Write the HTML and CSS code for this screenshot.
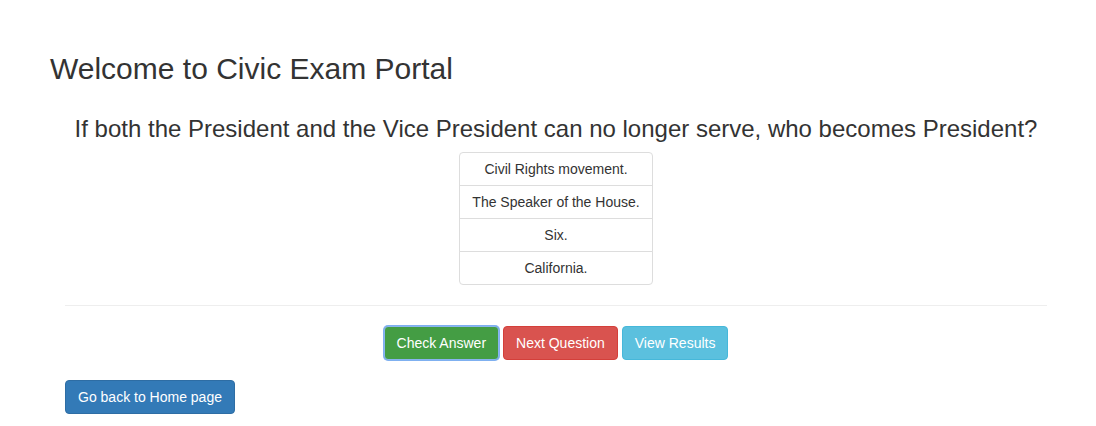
FILE: index.html
```html
<!DOCTYPE html>
<html>
<head>
<meta charset="utf-8">
<link rel="stylesheet" href="styles.css">
<title>Civic Exam Portal</title>
</head>
<body>
<div class="page">
  <h1 class="title">Welcome to Civic Exam Portal</h1>
  <div class="main">
    <h3 class="question">If both the President and the Vice President can no longer serve, who becomes President?</h3>
    <div class="answers">
      <ul class="list">
        <li class="item">Civil Rights movement.</li>
        <li class="item">The Speaker of the House.</li>
        <li class="item">Six.</li>
        <li class="item">California.</li>
      </ul>
    </div>
    <hr class="rule">
    <div class="actions">
      <button class="btn btn-success focused">Check Answer</button>
      <button class="btn btn-danger">Next Question</button>
      <button class="btn btn-info">View Results</button>
    </div>
    <div class="home">
      <button class="btn btn-primary">Go back to Home page</button>
    </div>
  </div>
</div>
</body>
</html>
```
FILE: styles.css
```css
* { box-sizing: border-box; }
html, body { margin: 0; padding: 0; background: #fff; }
body {
  font-family: "Liberation Sans", Arial, sans-serif;
  font-size: 14px;
  line-height: 1.42857;
  color: #333;
}
.page { padding-top: 52px; }
.title {
  margin: 0 0 31px 50px;
  font-size: 30px;
  font-weight: 500;
  line-height: 33px;
}
.main { padding: 0 49px 0 65px; }
.question {
  margin: 0 0 10px;
  font-size: 24px;
  font-weight: 500;
  line-height: 26px;
  text-align: center;
}
.answers { text-align: center; }
.list {
  display: inline-block;
  margin: 0;
  padding: 0;
  list-style: none;
  vertical-align: top;
}
.item {
  padding: 6px 12px;
  line-height: 20px;
  border: 1px solid #ddd;
  margin-bottom: -1px;
  background: #fff;
}
.item:first-child { border-radius: 4px 4px 0 0; }
.item:last-child { border-radius: 0 0 4px 4px; margin-bottom: 0; }
.rule {
  margin: 20px 0;
  border: 0;
  border-top: 1px solid #eee;
}
.actions { text-align: center; font-size: 0; display: flex; justify-content: center; gap: 4px; }
.btn {
  display: inline-block;
  padding: 6px 12px;
  font-family: inherit;
  font-size: 14px;
  line-height: 20px;
  border: 1px solid transparent;
  border-radius: 4px;
  color: #fff;
  cursor: pointer;
}
.btn-success { background: #5cb85c; border-color: #4cae4c; }
.btn-success.focused {
  background: #449d44;
  border-color: #255625;
  outline: none;
  box-shadow: 0 0 0 1px #7fb0f0;
  border-color: #8ab4f0;
}
.btn-danger { background: #d9534f; border-color: #d43f3a; }
.btn-info { background: #5bc0de; border-color: #46b8da; }
.btn-primary { background: #337ab7; border-color: #2e6da4; }
.home { margin-top: 20px; }
```
